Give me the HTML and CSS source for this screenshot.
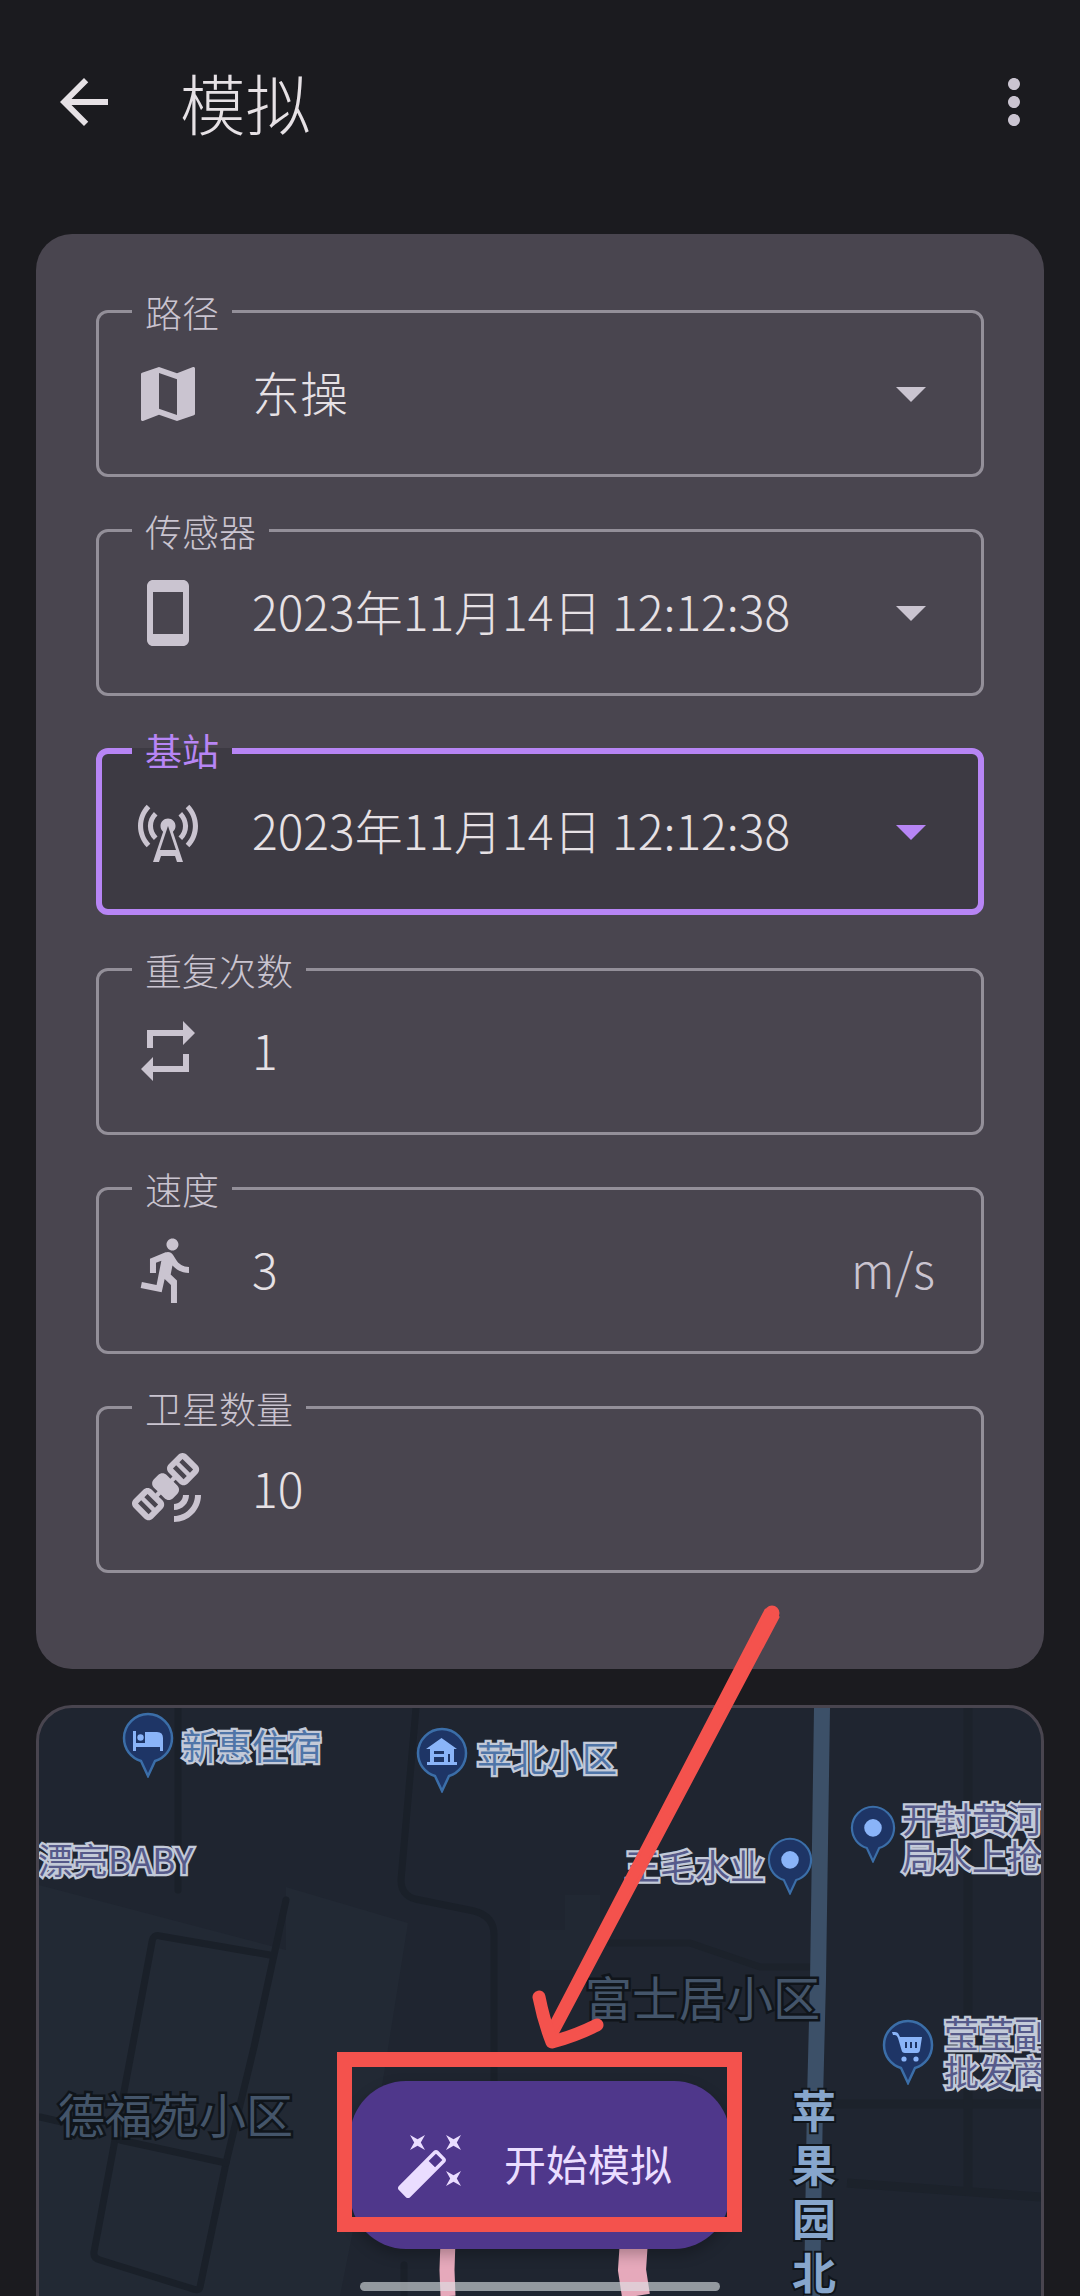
FILE: index.html
```html
<!DOCTYPE html>
<html lang="zh-CN">
<head>
<meta charset="utf-8">
<title>模拟</title>
<link rel="stylesheet" href="styles.css">
</head>
<body>
<div class="page">
  <header class="appbar">
    <svg class="icon back" viewBox="0 0 24 24"><path d="M20 11H7.83l5.59-5.59L12 4l-8 8 8 8 1.41-1.41L7.83 13H20v-2z"/></svg>
    <h1 class="title">模拟</h1>
    <svg class="icon more" viewBox="0 0 24 24"><path d="M12 8c1.1 0 2-.9 2-2s-.9-2-2-2-2 .9-2 2 .9 2 2 2zm0 2c-1.1 0-2 .9-2 2s.9 2 2 2 2-.9 2-2-.9-2-2-2zm0 6c-1.1 0-2 .9-2 2s.9 2 2 2 2-.9 2-2-.9-2-2-2z"/></svg>
  </header>

  <section class="card">
    <div class="field">
      <span class="label">路径</span>
      <svg class="icon" viewBox="0 0 24 24"><path d="M20.5 3l-.16.03L15 5.1 9 3 3.36 4.9c-.21.07-.36.25-.36.48V20.5c0 .28.22.5.5.5l.16-.03L9 18.9l6 2.1 5.64-1.9c.21-.07.36-.25.36-.48V3.5c0-.28-.22-.5-.5-.5zM15 19l-6-2.11V5l6 2.11V19z"/></svg>
      <span class="value">东操</span>
      <svg class="caret" viewBox="0 0 32 16"><path d="M0 0h32L16 16z"/></svg>
    </div>
    <div class="field">
      <span class="label">传感器</span>
      <svg class="icon" viewBox="0 0 24 24"><path d="M17 1.01L7 1c-1.1 0-2 .9-2 2v18c0 1.1.9 2 2 2h10c1.1 0 2-.9 2-2V3c0-1.1-.9-1.99-2-1.99zM17 19H7V5h10v14z"/></svg>
      <span class="value">2023年11月14日 12:12:38</span>
      <svg class="caret" viewBox="0 0 32 16"><path d="M0 0h32L16 16z"/></svg>
    </div>
    <div class="field focused">
      <span class="label">基站</span>
      <svg class="icon" viewBox="0 0 24 24"><path d="M7.3 14.7l1.2-1.2c-1-1-1.5-2.3-1.5-3.5 0-1.3.5-2.6 1.5-3.5L7.3 5.3c-1.3 1.3-2 3-2 4.7s.7 3.4 2 4.7zM19.1 2.9l-1.2 1.2c1.6 1.6 2.4 3.8 2.4 5.9 0 2.1-.8 4.3-2.4 5.9l1.2 1.2c2-2 2.9-4.5 2.9-7.1 0-2.6-1-5.1-2.9-7.1zM6.1 4.1 4.9 2.9C3 4.9 2 7.4 2 10c0 2.6 1 5.1 2.9 7.1l1.2-1.2c-1.6-1.6-2.4-3.8-2.4-5.9 0-2.1.8-4.3 2.4-5.9zm10.6 10.6c1.3-1.3 2-3 2-4.7-.1-1.7-.7-3.4-2-4.7l-1.2 1.2c1 1 1.5 2.3 1.5 3.5 0 1.3-.5 2.6-1.5 3.5l1.2 1.2zM14.5 10c0-1.38-1.12-2.5-2.5-2.5S9.5 8.62 9.5 10c0 .76.34 1.42.87 1.88L7 22h2l.67-2h4.67l.66 2h2l-3.37-10.12c.53-.46.87-1.12.87-1.88zm-5.17 8L12 10l2.67 8H9.33z"/></svg>
      <span class="value">2023年11月14日 12:12:38</span>
      <svg class="caret" viewBox="0 0 32 16"><path d="M0 0h32L16 16z"/></svg>
    </div>
    <div class="field">
      <span class="label">重复次数</span>
      <svg class="icon" viewBox="0 0 24 24"><path d="M7 7h10v3l4-4-4-4v3H5v6h2V7zm10 10H7v-3l-4 4 4 4v-3h12v-6h-2v4z"/></svg>
      <span class="value">1</span>
    </div>
    <div class="field">
      <span class="label">速度</span>
      <svg class="icon" viewBox="0 0 24 24"><path d="M13.49 5.48c1.1 0 2-.9 2-2s-.9-2-2-2-2 .9-2 2 .9 2 2 2zm-3.6 13.9l1-4.4 2.1 2v6h2v-7.5l-2.1-2 .6-3c1.3 1.5 3.3 2.5 5.5 2.5v-2c-1.9 0-3.5-1-4.3-2.4l-1-1.6c-.4-.6-1-1-1.7-1-.3 0-.5.1-.8.1l-5.2 2.2v4.7h2v-3.4l1.8-.7-1.6 8.1-4.9-1-.4 2 7 1.4z"/></svg>
      <span class="value">3</span>
      <span class="suffix">m/s</span>
    </div>
    <div class="field">
      <span class="label">卫星数量</span>
      <svg class="icon" viewBox="0 0 24 24"><path d="M15.44.59l-3.18 3.18c-.78.78-.78 2.05 0 2.83l1.24 1.24-.71.71-1.24-1.24c-.78-.78-2.05-.78-2.83 0L7.3 8.72c-.78.78-.78 2.05 0 2.83l1.24 1.24-.71.71-1.23-1.25c-.78-.78-2.05-.78-2.83 0L.59 15.43c-.78.78-.78 2.05 0 2.83l3.54 3.54c.78.78 2.05.78 2.83 0l3.18-3.18c.78-.78.78-2.05 0-2.83L8.9 14.55l.71-.71 1.24 1.24c.78.78 2.05.78 2.83 0l1.41-1.41c.78-.78.78-2.05 0-2.83L13.84 9.6l.71-.71 1.24 1.24c.78.78 2.05.78 2.83 0l3.18-3.18c.78-.78.78-2.05 0-2.83L18.27.59c-.78-.79-2.05-.79-2.83 0zM6.6 19.32l-1.06 1.06L2 16.85l1.06-1.06 3.54 3.53zm2.12-2.12l-1.06 1.06-3.54-3.54 1.06-1.06 3.54 3.54zm9.54-9.54l-1.06 1.06-3.54-3.54 1.06-1.06 3.54 3.54zm2.12-2.12L19.32 6.6l-3.54-3.54 1.06-1.06 3.54 3.54zM14 21v2c4.97 0 9-4.03 9-9h-2c0 3.87-3.13 7-7 7zm0-4v2c2.76 0 5-2.24 5-5h-2c0 1.66-1.34 3-3 3z"/></svg>
      <span class="value">10</span>
    </div>
  </section>

  <section class="map">
    <svg class="roads" viewBox="39 1708 1002 588">
      <path class="area" d="M39 1885L286 1950 L286 1887 L408 1923L383 2080L340 2296H39z"/>
      <path class="area-soft" d="M565 1895h35v35h-35zM530 1930h70v40h-70z"/>
      <g class="road">
        <path d="M178 1708V1890"/>
        <path d="M416 1708L401 1880Q401 1895 415 1899L474 1911Q494 1916 494 1935V2090"/>
        <path d="M286 1900L254 2047L226 2163L200 2287Q199 2292 190 2288L100 2260Q93 2258 94 2252L152 1942Q153 1934 160 1936L270 1955"/>
        <path d="M120 2140L226 2163"/>
        <path d="M40 2117L62 2122"/>
        <path d="M404 2265V2296"/>
      </g>
      <g class="road soft">
        <path d="M610 1943H690L760 1967H815"/>
      </g>
      <g class="road faint">
        <path d="M830 2104H1041"/>
        <path d="M847 2183L1041 2197"/>
        <path d="M968 1708V2190"/>
      </g>
      <path class="river" d="M822 1708L818 1980L815 2100L812 2296"/>
      <path class="trail" d="M448 2240L447 2270L448 2296"/>
      <path class="trail wide" d="M634 2240L632 2270L636 2296"/>
    </svg>

    <svg class="pin pin-bed" viewBox="0 0 52 66"><path class="pin-body" d="M26 64L19 49C9 46 2 37 2 26 2 13 13 2 26 2s24 11 24 24c0 11-7 20-17 23z"/><path class="pin-glyph" d="M11 19h3v12h9V20h12q6 0 6 6v13h-3v-4H14v4h-3z"/><circle class="pin-glyph" cx="18.5" cy="25.5" r="3.2"/></svg>
    <span class="poi t-xinhui">新惠住宿</span>

    <svg class="pin pin-home" viewBox="0 0 52 66"><path class="pin-body" d="M26 64L19 49C9 46 2 37 2 26 2 13 13 2 26 2s24 11 24 24c0 11-7 20-17 23z"/><path class="pin-glyph" fill-rule="evenodd" d="M25.500 11L10 22h4v13h-3v3h30v-3h-3V22h3zM18 24h10v3H18zM18 30h10v5H18zM32 27h2v8h-2z"/></svg>
    <span class="poi t-pingbei">苹北小区</span>

    <span class="poi alt t-baby">漂亮BABY</span>

    <span class="poi alt t-wangmao">王毛水业</span>
    <svg class="pin small pin-wang" viewBox="0 0 52 66"><path class="pin-body" d="M26 64L19 49C9 46 2 37 2 26 2 13 13 2 26 2s24 11 24 24c0 11-7 20-17 23z"/><circle class="pin-glyph" cx="26" cy="26" r="10"/></svg>

    <svg class="pin small pin-kf" viewBox="0 0 52 66"><path class="pin-body" d="M26 64L19 49C9 46 2 37 2 26 2 13 13 2 26 2s24 11 24 24c0 11-7 20-17 23z"/><circle class="pin-glyph" cx="26" cy="26" r="10"/></svg>
    <span class="poi alt t-kf">开封黄河<br>局水上抢</span>

    <span class="area-name t-fuji">富士居小区</span>
    <span class="area-name t-defu">德福苑小区</span>

    <svg class="pin pin-cart" viewBox="0 0 52 66"><path class="pin-body" d="M26 64L19 49C9 46 2 37 2 26 2 13 13 2 26 2s24 11 24 24c0 11-7 20-17 23z"/><path class="pin-glyph" fill-rule="evenodd" d="M10 13h3q3 0 4 3l1 2h22l-2 13q-.5 3-3 3H23q-3 0-3.500-3L16 19q-1-3-3-3h-2zM23 23v6h2v-6zM28 23v6h2v-6zM33 23v6h2v-6z"/><circle class="pin-glyph" cx="22" cy="40" r="2.600"/><circle class="pin-glyph" cx="34" cy="40" r="2.600"/></svg>
    <span class="poi alt t-ying">莹莹副<br>批发商</span>

    <span class="road-name">苹<br>果<br>园<br>北</span>

    <button class="start" type="button">
      <svg class="icon" viewBox="0 0 24 24"><path d="M7.5 5.6L10 7 8.6 4.5 10 2 7.5 3.4 5 2l1.4 2.5L5 7zm12 9.8L17 14l1.4 2.5L17 19l2.5-1.4L22 19l-1.4-2.5L22 14zM22 2l-2.5 1.4L17 2l1.4 2.5L17 7l2.5-1.4L22 7l-1.4-2.5zm-7.63 5.29c-.39-.39-1.02-.39-1.41 0L1.29 18.96c-.39.39-.39 1.02 0 1.41l2.34 2.34c.39.39 1.02.39 1.41 0L16.7 11.05c.39-.39.39-1.02 0-1.41l-2.33-2.35zm-1.03 5.49l-2.12-2.12 2.44-2.44 2.12 2.12-2.44 2.44z"/></svg>
      <span class="start-text">开始模拟</span>
    </button>
  </section>

  <div class="home-bar"></div>

  <svg class="annotation" viewBox="0 0 1080 2296">
    <circle class="shaft" cx="772" cy="1613" r="6"/>
    <path class="shaft" d="M766 1610L778 1617L557 2034L548 2029z"/>
    <path class="head" d="M539 1997Q544 2022 552 2042Q575 2036 597 2025"/>
  </svg>
  <div class="red-box"></div>
</div>
</body>
</html>
```

FILE: styles.css
```css
* { box-sizing: border-box; }

html, body {
  margin: 0;
  padding: 0;
  background: #1b1b1f;
}

body {
  font-family: "Noto Sans CJK SC", "Noto Sans", sans-serif;
  color: #e6e1e5;
}

.page {
  position: relative;
  width: 1080px;
  height: 2296px;
  overflow: hidden;
}

.icon {
  flex: none;
  width: 72px;
  height: 72px;
  fill: #cac4d0;
}

.appbar {
  display: flex;
  align-items: center;
  height: 204px;
  padding: 0 30px 0 48px;
}

.back { fill: #e6e1e5; }

.title {
  flex: 1;
  margin: 0 0 0 60px;
  font-size: 65.500px;
  font-weight: 300;
  line-height: 80px;
  color: #e6e1e5;
}

.card {
  display: flex;
  flex-direction: column;
  gap: 52.2px;
  margin: 30px 36px 0;
  padding: 76px 60px 96px;
  background: #49454f;
  border-radius: 36px;
}

.field {
  position: relative;
  display: flex;
  align-items: center;
  height: 167px;
  padding: 0 54px 0 33px;
  border: 3px solid #938f99;
  border-radius: 12px;
}

.label {
  position: absolute;
  top: -19px;
  left: 33px;
  padding: 0 13px;
  font-size: 37px;
  font-weight: 300;
  line-height: 36px;
  color: #cac4d0;
  background: #49454f;
}

.value {
  flex: 1;
  margin: 0 0 5px 48px;
  font-size: 48px;
  font-weight: 300;
  line-height: 60px;
  color: #e6e1e5;
}

.caret {
  flex: none;
  width: 30px;
  height: 15px;
  margin: 2px 1px 0 0;
  fill: #cac4d0;
}

.suffix {
  margin: 0 -8px 5px 0;
  font-size: 48px;
  font-weight: 300;
  line-height: 60px;
  color: #cac4d0;
}

.focused {
  padding: 0 51px 0 30px;
  border: 6px solid #b785f5;
  background: #3d3a43;
}

.focused .label {
  top: -22px;
  left: 30px;
  font-weight: 400;
  color: #b785f5;
  background: linear-gradient(#49454f 0 16px, #3d3a43 16px);
}

.focused .caret { fill: #b785f5; }

/* map canvas */
.map {
  position: relative;
  height: 640px;
  margin: 36px 36px 0;
  border: 3px solid #49454f;
  border-radius: 36px;
  background: #1f2530;
  overflow: hidden;
}

.roads {
  position: absolute;
  top: 0;
  left: 0;
  width: 1002px;
  height: 588px;
}

.area { fill: #222934; }
.area-soft { fill: #212833; }

.road path {
  fill: none;
  stroke: #1a2029;
  stroke-width: 7;
  stroke-linejoin: round;
  stroke-linecap: round;
}

.road.soft path { stroke: #1c222b; }

.road.faint path {
  stroke: #1c222b;
  stroke-width: 9;
  stroke-linecap: butt;
}

.river {
  fill: none;
  stroke: #3c5068;
  stroke-width: 16;
}

.trail {
  fill: none;
  stroke: #e6a9bb;
  stroke-width: 15;
}

.trail.wide { stroke-width: 28; }

.pin {
  position: absolute;
  width: 52px;
  height: 66px;
}

.pin.small {
  width: 46px;
  height: 58px;
}

.pin-body {
  fill: #1e3566;
  stroke: #3b6ea8;
  stroke-width: 2.500;
}

.pin-glyph { fill: #8ab4f8; }

.pin-bed { left: 83px; top: 4px; }
.pin-home { left: 377px; top: 19px; }
.pin-wang { left: 728px; top: 129px; }
.pin-kf { left: 811px; top: 97px; }
.pin-cart { left: 843px; top: 311px; }

.poi {
  position: absolute;
  font-size: 35px;
  font-weight: 400;
  line-height: 38px;
  white-space: nowrap;
  color: #4f75a8;
  -webkit-text-stroke: 4.500px #c3cad8;
  paint-order: stroke fill;
}

.poi.alt { color: #565a8a; }

.t-xinhui { left: 143px; top: 18px; }
.t-pingbei { left: 438px; top: 30px; }
.t-baby { left: -1px; top: 132px; }
.t-wangmao { left: 586px; top: 138px; }
.t-kf { left: 863px; top: 91px; }
.t-ying { left: 905px; top: 306px; }

.area-name {
  position: absolute;
  font-size: 47px;
  font-weight: 400;
  line-height: 50px;
  white-space: nowrap;
  color: #44556a;
  -webkit-text-stroke: 5px #10151b;
  paint-order: stroke fill;
}

.t-fuji { left: 546px; top: 263px; }
.t-defu { left: 19px; top: 380px; }

.road-name {
  position: absolute;
  left: 753px;
  top: 374px;
  font-size: 44px;
  font-weight: 700;
  line-height: 54px;
  text-align: center;
  color: #87a6cc;
  -webkit-text-stroke: 4px #10151b;
  paint-order: stroke fill;
}

.start {
  position: absolute;
  left: 311px;
  top: 373px;
  display: flex;
  align-items: center;
  gap: 37px;
  width: 380px;
  height: 168px;
  padding: 0 0 0 45px;
  border: 0;
  border-radius: 56px;
  background: #4f378b;
  color: #eaddff;
  font-family: inherit;
  font-size: 42px;
  box-shadow: 0 6px 14px rgba(0, 0, 0, .25);
}

.start .icon { fill: #eaddff; }

.start-text { margin-bottom: 4px; }

.home-bar {
  position: absolute;
  left: 360px;
  top: 2282px;
  width: 360px;
  height: 9px;
  border-radius: 5px;
  background: rgba(220, 224, 228, .62);
}

.annotation {
  position: absolute;
  top: 0;
  left: 0;
  width: 1080px;
  height: 2296px;
  pointer-events: none;
}

.shaft {
  fill: #f4524d;
  stroke: #f4524d;
  stroke-width: 3;
  stroke-linejoin: round;
}

.head {
  fill: none;
  stroke: #f4524d;
  stroke-width: 13;
  stroke-linecap: round;
  stroke-linejoin: round;
}

.red-box {
  position: absolute;
  left: 337px;
  top: 2052px;
  width: 405px;
  height: 180px;
  border: 15px solid #f4524d;
}
```
